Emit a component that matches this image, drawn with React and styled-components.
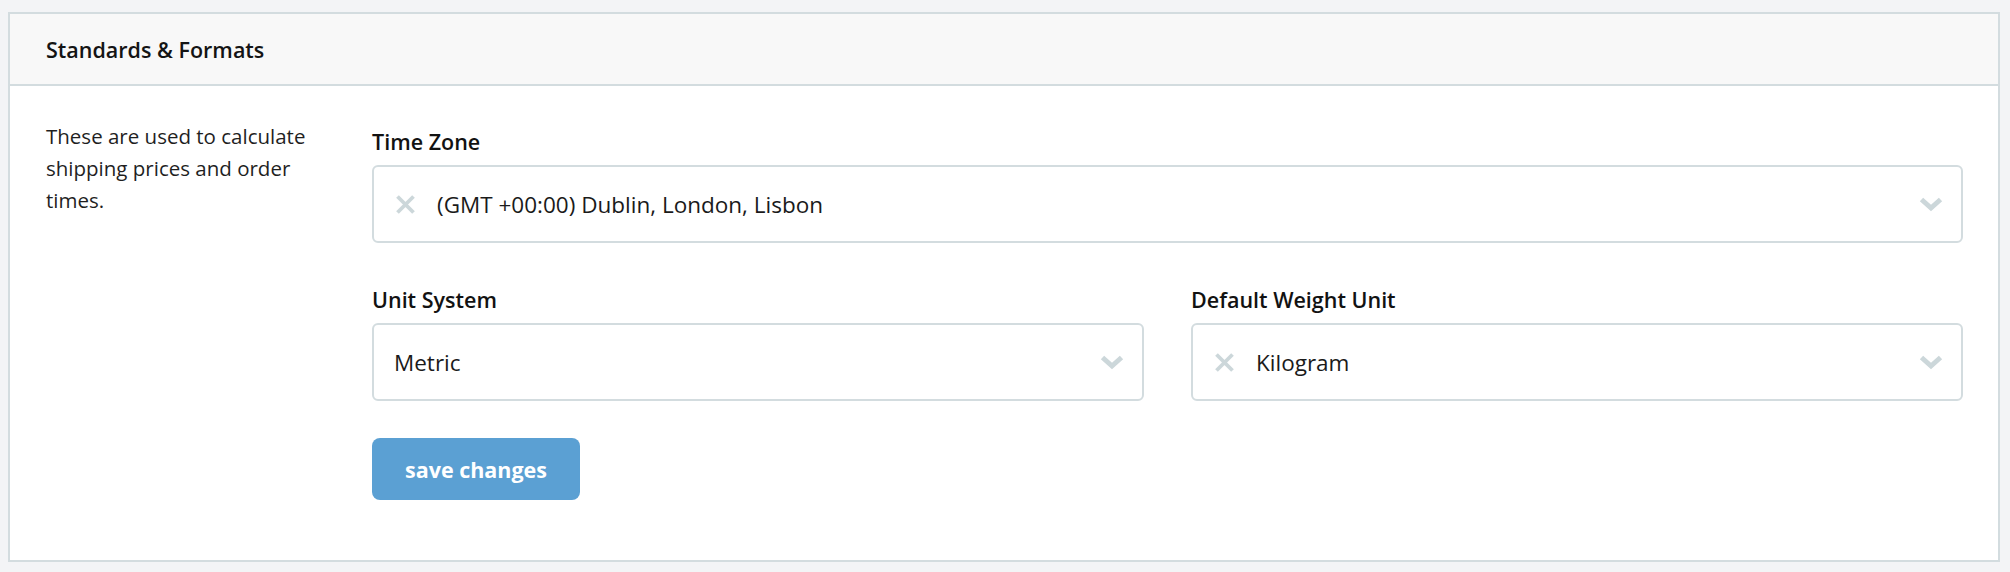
import styled, { createGlobalStyle } from "styled-components";

const GlobalStyle = createGlobalStyle`
  html, body {
    margin: 0;
    padding: 0;
    background: #f3f4f6;
    font-family: "Open Sans", Lato, "Liberation Sans", sans-serif;
    color: #1c1c1c;
  }
  * { box-sizing: border-box; }
`;

const Page = styled.div`
  padding: 12px 10px 10px 8px;
`;

const Card = styled.section`
  background: #ffffff;
  border: 2px solid #d3dcdf;
`;

const CardHeader = styled.header`
  height: 72px;
  display: flex;
  align-items: center;
  padding: 0 36px;
  background: #f8f8f8;
  border-bottom: 2px solid #d3dcdf;
`;

const Title = styled.h2`
  margin: 0;
  font-size: 21.5px;
  font-weight: 600;
  color: #141414;
`;

const CardBody = styled.div`
  display: grid;
  grid-template-columns: 284px 1fr;
  column-gap: 42px;
  padding: 34px 35px 60px 36px;
`;

const Description = styled.p`
  margin: 0;
  font-size: 20.5px;
  line-height: 32px;
  color: #1f1f1f;
`;

const Form = styled.div`
  display: flex;
  flex-direction: column;
  padding-top: 9px;
`;

const Row = styled.div`
  display: grid;
  grid-template-columns: repeat(${(p) => p.cols || 1}, 1fr);
  column-gap: 47px;
  margin-bottom: ${(p) => p.gap || 0}px;
`;

const Field = styled.div`
  display: flex;
  flex-direction: column;
`;

const Label = styled.label`
  font-size: 21.5px;
  font-weight: 600;
  line-height: 26px;
  margin-bottom: 10px;
  color: #121212;
`;

const SelectBox = styled.div`
  height: 78px;
  display: flex;
  align-items: center;
  padding: 0 18px 0 ${(p) => (p.clearable ? 21 : 20)}px;
  border: 2px solid #d3dcdf;
  border-radius: 6px;
  background: #fff;
`;

const Clear = styled.span`
  display: inline-flex;
  width: 21px;
  height: 21px;
  margin-right: 21px;
`;

const Value = styled.span`
  flex: 1;
  font-size: 22.5px;
  color: #1a1a1a;
`;

const Chevron = styled.span`
  display: inline-flex;
  width: 24px;
  height: 16px;
`;

const SaveButton = styled.button`
  align-self: flex-start;
  width: 208px;
  height: 62px;
  border: none;
  border-radius: 8px;
  background: #5ba0d3;
  color: #fff;
  font-family: inherit;
  font-size: 21.5px;
  font-weight: 700;
  cursor: pointer;
`;

const XIcon = () => (
  <svg width="21" height="21" viewBox="0 0 21 21">
    <path d="M2.5 2.5 L18.5 18.5 M18.5 2.5 L2.5 18.5" stroke="#ccd7da" strokeWidth="3.8" />
  </svg>
);

const ChevronIcon = () => (
  <svg width="24" height="16" viewBox="0 0 24 16">
    <path d="M2.5 3.5 L12 12 L21.5 3.5" fill="none" stroke="#ccd7da" strokeWidth="5" />
  </svg>
);

const Select = ({ value, clearable }) => (
  <SelectBox clearable={clearable}>
    {clearable && (
      <Clear>
        <XIcon />
      </Clear>
    )}
    <Value>{value}</Value>
    <Chevron>
      <ChevronIcon />
    </Chevron>
  </SelectBox>
);

export default function App() {
  return (
    <Page>
      <GlobalStyle />
      <Card>
        <CardHeader>
          <Title>Standards &amp; Formats</Title>
        </CardHeader>
        <CardBody>
          <Description>
            These are used to calculate shipping prices and order times.
          </Description>
          <Form>
            <Row gap={44}>
              <Field>
                <Label>Time Zone</Label>
                <Select value="(GMT +00:00) Dublin, London, Lisbon" clearable />
              </Field>
            </Row>
            <Row cols={2} gap={37}>
              <Field>
                <Label>Unit System</Label>
                <Select value="Metric" />
              </Field>
              <Field>
                <Label>Default Weight Unit</Label>
                <Select value="Kilogram" clearable />
              </Field>
            </Row>
            <SaveButton>save changes</SaveButton>
          </Form>
        </CardBody>
      </Card>
    </Page>
  );
}
